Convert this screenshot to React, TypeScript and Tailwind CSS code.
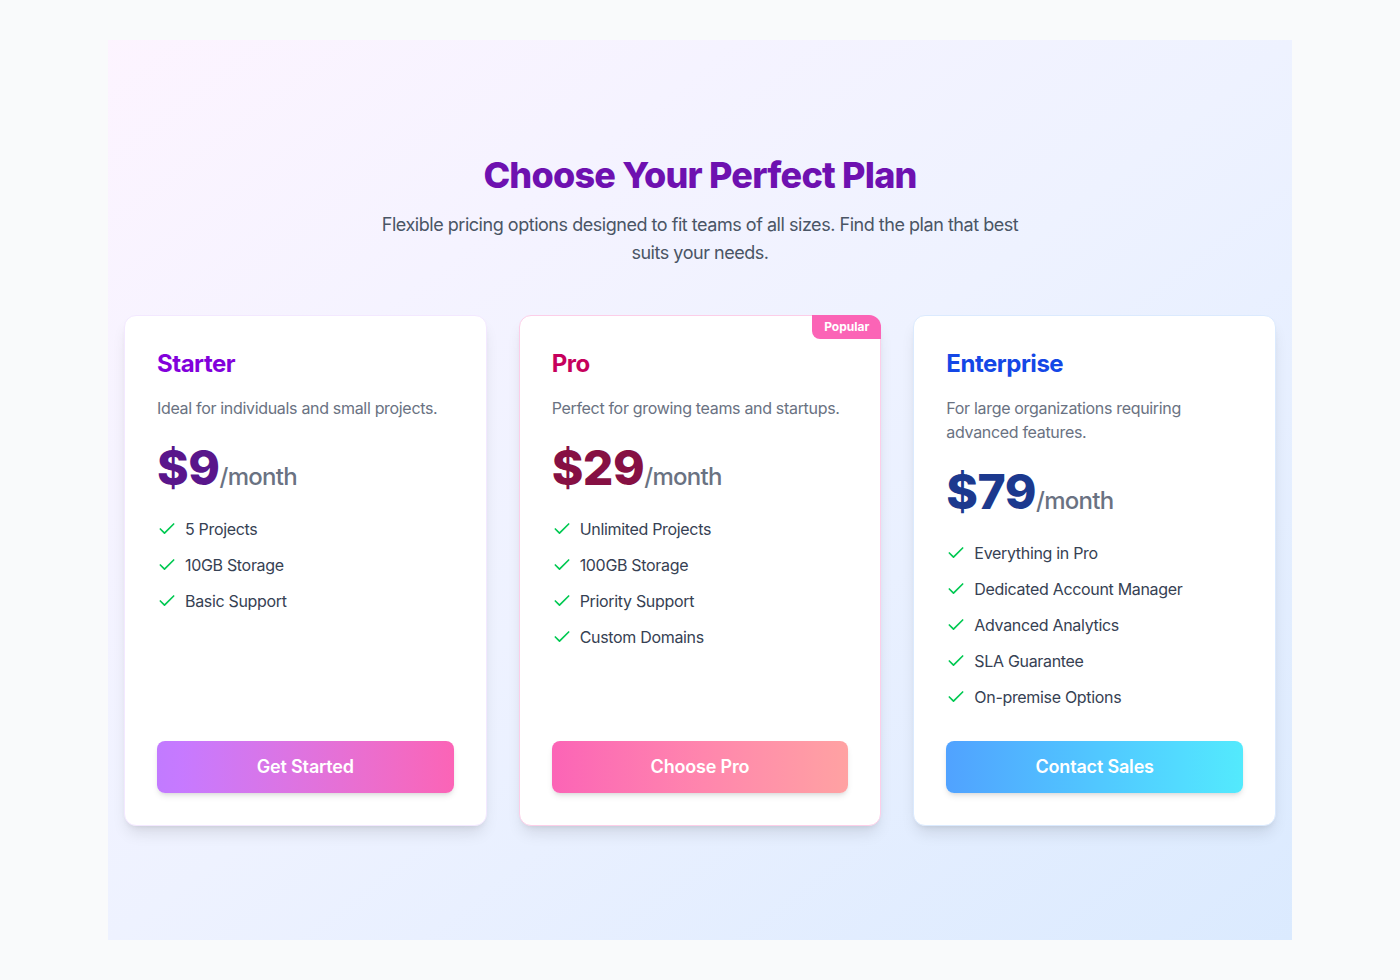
import React from 'react'
import { Check } from 'lucide-react'

const plans = [
  {
    name: 'Starter',
    description: 'Ideal for individuals and small projects.',
    price: '$9',
    features: ['5 Projects', '10GB Storage', 'Basic Support'],
    cta: 'Get Started',
    border: 'border-purple-100',
    titleColor: 'text-purple-700',
    priceColor: 'text-purple-900',
    button: 'bg-gradient-to-r from-purple-400 to-pink-400',
    popular: false,
  },
  {
    name: 'Pro',
    description: 'Perfect for growing teams and startups.',
    price: '$29',
    features: ['Unlimited Projects', '100GB Storage', 'Priority Support', 'Custom Domains'],
    cta: 'Choose Pro',
    border: 'border-pink-200',
    titleColor: 'text-pink-700',
    priceColor: 'text-pink-900',
    button: 'bg-gradient-to-r from-pink-400 to-red-300',
    popular: true,
  },
  {
    name: 'Enterprise',
    description: 'For large organizations requiring advanced features.',
    price: '$79',
    features: ['Everything in Pro', 'Dedicated Account Manager', 'Advanced Analytics', 'SLA Guarantee', 'On-premise Options'],
    cta: 'Contact Sales',
    border: 'border-blue-100',
    titleColor: 'text-blue-700',
    priceColor: 'text-blue-900',
    button: 'bg-gradient-to-r from-blue-400 to-cyan-300',
    popular: false,
  },
]

export default function App() {
  return (
    <div className="min-h-screen bg-gray-50 py-10 font-['Inter',sans-serif]">
      <section className="mx-auto w-[1184px] h-[900px] px-4 flex flex-col justify-center bg-gradient-to-br from-fuchsia-50 via-indigo-50 to-blue-100">
        <div className="text-center mb-12">
          <h1 className="text-4xl font-extrabold text-purple-800 tracking-[-0.022em] mb-4">Choose Your Perfect Plan</h1>
          <p className="text-lg text-gray-600 max-w-2xl mx-auto tracking-[-0.026em]">
            Flexible pricing options designed to fit teams of all sizes. Find the plan that best suits your needs.
          </p>
        </div>

        <div className="grid grid-cols-3 gap-8">
          {plans.map((plan) => (
            <div key={plan.name} className={`relative bg-white rounded-xl border ${plan.border} shadow-lg p-8 flex flex-col`}>
              {plan.popular && (
                <span className="absolute -top-px -right-px bg-pink-400 text-white text-xs font-bold px-3 py-1 rounded-bl-lg rounded-tr-xl">
                  Popular
                </span>
              )}
              <h2 className={`text-2xl font-bold tracking-[-0.02em] ${plan.titleColor}`}>{plan.name}</h2>
              <p className="mt-4 text-base text-gray-500 tracking-[-0.02em]">{plan.description}</p>
              <div className="mt-6 flex items-baseline">
                <span className={`text-5xl font-extrabold tracking-[-0.01em] ${plan.priceColor}`}>{plan.price}</span>
                <span className="text-2xl font-medium text-gray-500 tracking-[-0.03em]">/month</span>
              </div>
              <ul className="mt-6 mb-8 space-y-3">
                {plan.features.map((f) => (
                  <li key={f} className="flex items-center gap-2 text-base text-gray-700 tracking-[-0.02em]">
                    <Check className="h-5 w-5 text-green-500" strokeWidth={2} />
                    {f}
                  </li>
                ))}
              </ul>
              <button className={`mt-auto w-full rounded-lg py-3 text-lg font-semibold text-white shadow-md tracking-[-0.01em] ${plan.button}`}>
                {plan.cta}
              </button>
            </div>
          ))}
        </div>
      </section>
    </div>
  )
}
